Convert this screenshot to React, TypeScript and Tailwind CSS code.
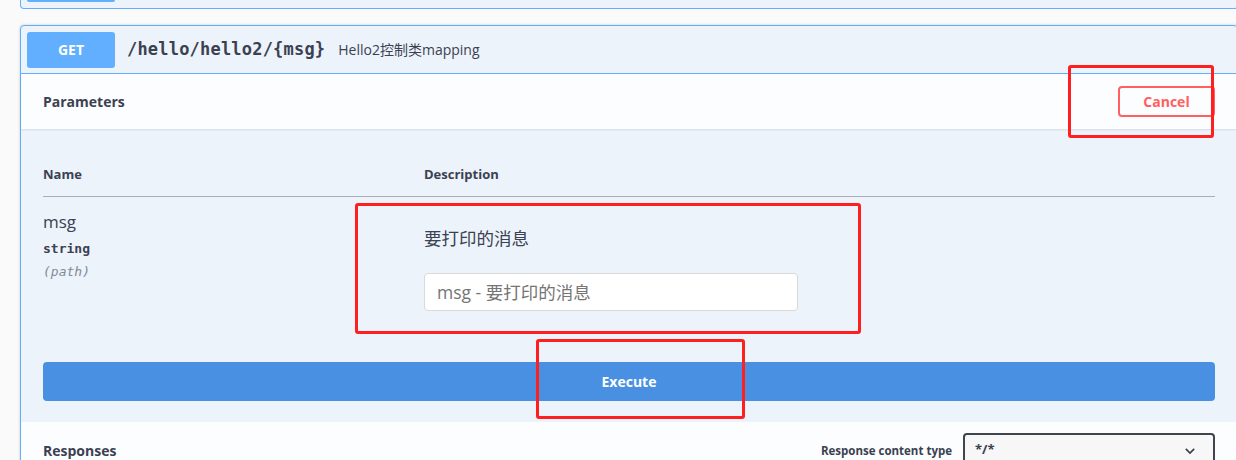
import React from "react";

const sans = "font-['Open_Sans','Noto_Sans','Noto_Sans_CJK_SC',sans-serif]";
const mono = "font-['DejaVu_Sans_Mono','Liberation_Mono',monospace]";

export default function App() {
  return (
    <div className={`relative w-[1236px] h-[460px] overflow-hidden bg-[#fafafa] pl-[20px] text-[#3b4151] ${sans}`}>
      {/* previous opblock tail */}
      <div className="w-[1218px] h-[9px] border-x border-b border-[#61affe] rounded-b-[4px] bg-[#ecf3fb] pl-[6px]">
        <div className="w-[88px] h-[2px] bg-[#61affe] rounded-b-[3px]" />
      </div>

      {/* current opblock */}
      <div className="mt-[16px] w-[1218px] border border-[#61affe] rounded-[4px] bg-[#ecf3fb] shadow-[0_0_3px_rgba(0,0,0,0.19)]">
        {/* summary */}
        <div className="flex items-center h-[48px] px-[6px] border-b border-[#61affe]">
          <div className="w-[88px] h-[36px] rounded-[3px] bg-[#61affe] flex items-center justify-center text-white font-bold text-[14px]">
            GET
          </div>
          <div className={`ml-[12px] text-[17px] font-bold tracking-[0.2px] text-[#3b4151] ${mono}`}>
            /hello/hello2/{"{msg}"}
          </div>
          <div className="ml-[13px] text-[14px] text-[#3b4151]">Hello2控制类mapping</div>
        </div>

        {/* section header */}
        <div className="flex items-center justify-between h-[55px] px-[22px] bg-[rgba(255,255,255,0.8)] shadow-[0_1px_2px_rgba(0,0,0,0.1)]">
          <div className="text-[14px] font-bold">Parameters</div>
          <button className="w-[97px] h-[31px] border-2 border-[#ff6060] rounded-[4px] text-[#ff6060] text-[14px] font-bold bg-transparent">
            Cancel
          </button>
        </div>

        {/* parameters body */}
        <div className="px-[22px] pt-[36px]">
          <div className="flex border-b border-[#aaaeb6] pb-[13px] text-[13px] font-bold leading-[18px]">
            <div className="w-[381px]">Name</div>
            <div>Description</div>
          </div>
          <div className="flex">
            <div className="w-[381px] pt-[14px]">
              <div className="text-[17px] leading-[22px]">msg</div>
              <div className={`mt-[7px] text-[13px] font-bold leading-[18px] ${mono}`}>string</div>
              <div className={`mt-[5px] text-[13px] italic leading-[18px] text-[#818a98] ${mono}`}>(path)</div>
            </div>
            <div className="pt-[29px]">
              <div className="text-[17.5px] leading-[24px]">要打印的消息</div>
              <div className="mt-[23px] w-[374px] h-[38px] rounded-[4px] border border-[#d9d9d9] bg-white flex items-center px-[12px] text-[17.5px] text-[#757575]">
                msg - 要打印的消息
              </div>
            </div>
          </div>
          <div className="mt-[51px] h-[39px] rounded-[4px] bg-[#4990e2] flex items-center justify-center text-white text-[14px] font-bold">
            Execute
          </div>
          <div className="h-[21px]" />
        </div>

        {/* responses */}
        <div className="flex items-start justify-between px-[22px] pt-[11px] h-[80px] bg-[rgba(255,255,255,0.8)]">
          <div className="text-[14px] font-bold pt-[7px]">Responses</div>
          <div className="flex items-start">
            <div className="text-[11.5px] font-bold pt-[9px] mr-[11px]">Response content type</div>
            <div className="w-[252px] h-[40px] border-2 border-[#41444e] rounded-[4px] bg-[#f7f7f7] flex items-start justify-between px-[10px] pt-[5px]">
              <span className="text-[13px] font-bold">*/*</span>
              <svg width="14" height="14" viewBox="0 0 20 20" className="mt-[4px] mr-[6px]">
                <path d="M4 7l6 6 6-6" fill="none" stroke="#3b4151" strokeWidth="2.4" />
              </svg>
            </div>
          </div>
        </div>
      </div>

      {/* red annotation boxes */}
      <div className="absolute left-[1068px] top-[65px] w-[146px] h-[73px] border-[3px] border-[#ff1f1f] rounded-[3px]" />
      <div className="absolute left-[355px] top-[203px] w-[506px] h-[131px] border-[3px] border-[#ff1f1f] rounded-[3px]" />
      <div className="absolute left-[536px] top-[339px] w-[209px] h-[80px] border-[3px] border-[#ff1f1f] rounded-[3px]" />
    </div>
  );
}
